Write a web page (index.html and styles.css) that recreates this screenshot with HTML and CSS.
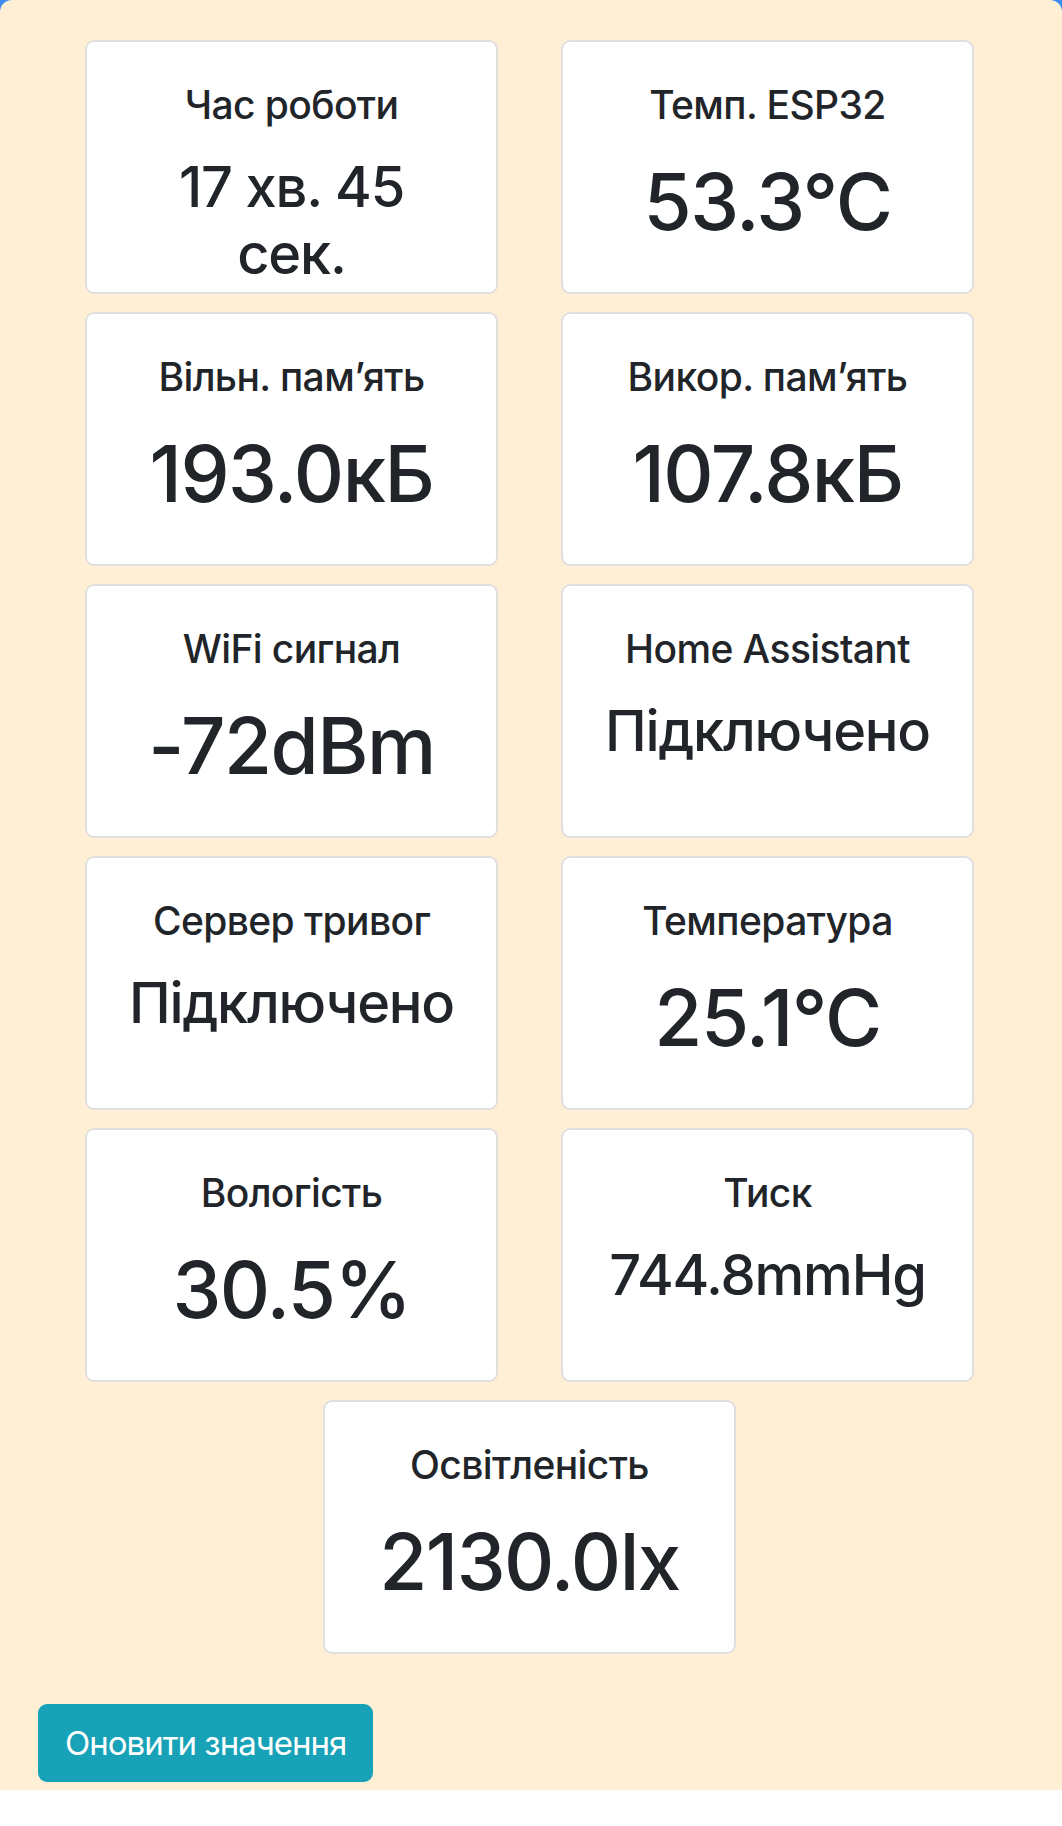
FILE: index.html
```html
<!DOCTYPE html>
<html lang="uk">
<head>
<meta charset="utf-8">
<title>ESP32</title>
<link rel="stylesheet" href="styles.css">
</head>
<body>
<div class="page">
  <main class="panel">
    <section class="cards">
      <div class="card"><div class="card-title">Час роботи</div><div class="card-value mid">17 хв. 45 сек.</div></div>
      <div class="card"><div class="card-title">Темп. ESP32</div><div class="card-value big">53.3°C</div></div>
      <div class="card"><div class="card-title">Вільн. пам’ять</div><div class="card-value big">193.0кБ</div></div>
      <div class="card"><div class="card-title">Викор. пам’ять</div><div class="card-value big">107.8кБ</div></div>
      <div class="card"><div class="card-title">WiFi сигнал</div><div class="card-value big">-72dBm</div></div>
      <div class="card"><div class="card-title">Home Assistant</div><div class="card-value mid">Підключено</div></div>
      <div class="card"><div class="card-title">Сервер тривог</div><div class="card-value mid">Підключено</div></div>
      <div class="card"><div class="card-title">Температура</div><div class="card-value big">25.1°C</div></div>
      <div class="card"><div class="card-title">Вологість</div><div class="card-value big">30.5%</div></div>
      <div class="card"><div class="card-title">Тиск</div><div class="card-value mid">744.8mmHg</div></div>
      <div class="card"><div class="card-title">Освітленість</div><div class="card-value big">2130.0lx</div></div>
    </section>
    <div class="actions">
      <button class="btn-refresh" type="button">Оновити значення</button>
    </div>
  </main>
</div>
</body>
</html>
```
FILE: styles.css
```css
html, body {
  margin: 0;
  padding: 0;
  background: #ffffff;
}
body {
  font-family: "Inter", "Noto Sans", "Liberation Sans", sans-serif;
  color: #212529;
}
.page {
  background: linear-gradient(#3c8cf3 0, #3c8cf3 20px, #ffffff 20px);
}
.panel {
  background: #ffefd5;
  border-radius: 12px 12px 0 0;
  padding: 39.5px 0 8px 0;
}
.cards {
  width: 889px;
  margin-left: 85px;
  display: flex;
  flex-wrap: wrap;
  justify-content: center;
  column-gap: 63px;
  row-gap: 18px;
}
.card {
  box-sizing: border-box;
  width: 413px;
  height: 254px;
  background: #ffffff;
  border: 2px solid #dfdfdf;
  border-radius: 9px;
  padding: 40px 36px 0 36px;
  text-align: center;
}
.card-title {
  font-size: 39px;
  line-height: 1.2;
  font-weight: 500;
  letter-spacing: -0.6px;
  white-space: nowrap;
}
.card-value {
  margin-top: 27px;
  font-weight: 500;
  line-height: 1.2;
  white-space: normal;
}
.card-value.big {
  font-size: 78px;
  letter-spacing: -1.5px;
  margin-left: -30px;
  margin-right: -30px;
}
.card-value.mid {
  font-size: 56px;
  margin-top: 26px;
  letter-spacing: -1.2px;
}
.actions {
  margin-top: 50px;
  padding-left: 38px;
}
.btn-refresh {
  box-sizing: border-box;
  height: 78px;
  padding: 0 27px;
  background: #17a2b8;
  color: #ffffff;
  border: 0;
  border-radius: 9px;
  font-family: "Inter", "Noto Sans", "Liberation Sans", sans-serif;
  font-size: 33px;
  font-weight: 400;
  letter-spacing: -1px;
}
```
